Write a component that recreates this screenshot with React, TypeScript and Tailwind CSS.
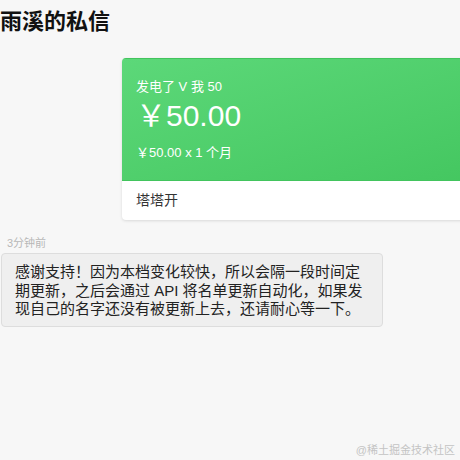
import React from 'react';

const font = { fontFamily: '"Liberation Sans", "Noto Sans CJK SC", sans-serif' };

const App: React.FC = () => {
  return (
    <div
      className="relative w-[460px] h-[460px] overflow-hidden bg-[#f7f7f7] text-[#333]"
      style={font}
    >
      {/* Header */}
      <h1 className="pt-[7px] text-[22px] leading-[30px] font-bold text-[#111] whitespace-nowrap">
        雨溪的私信
      </h1>

      {/* Sponsor card */}
      <div className="mt-[21px] ml-[122px] w-[380px] rounded-[4px] overflow-hidden bg-white shadow-[0_1px_3px_rgba(0,0,0,0.12)]">
        <div className="bg-gradient-to-br from-[#5cd879] to-[#43c65f] border-t border-b border-[#42c45d] pl-[14px] pt-[19px] pb-[18px] text-white">
          <p className="text-[13px] leading-[18px]">发电了 V 我 50</p>
          <p className="mt-[2px] text-[30px] leading-[36px]">￥50.00</p>
          <p className="mt-[10px] text-[13px] leading-[18px]">￥50.00 x 1 个月</p>
        </div>
        <div className="px-[14px] py-[10px] text-[14px] leading-[19px] text-[#333]">塔塔开</div>
      </div>

      {/* Reply */}
      <div className="mt-[16px] pl-[7px] text-[11px] leading-[14px] text-[#b8b8b8]">3分钟前</div>
      <div className="mt-[3px] ml-px w-[382px] rounded-[4px] border border-[#dddddd] bg-[#efefef] pl-[13px] pr-[13px] pt-[9px] pb-[7px] text-[15px] leading-[18.7px] text-[#222]">
        感谢支持！因为本档变化较快，所以会隔一段时间定期更新，之后会通过 API 将名单更新自动化，如果发现自己的名字还没有被更新上去，还请耐心等一下。
      </div>

      {/* Watermark */}
      <div className="absolute right-[5px] bottom-[3px] text-[11px] leading-[14px] text-[#c4c4c4] whitespace-nowrap">
        @稀土掘金技术社区
      </div>
    </div>
  );
};

export default App;
